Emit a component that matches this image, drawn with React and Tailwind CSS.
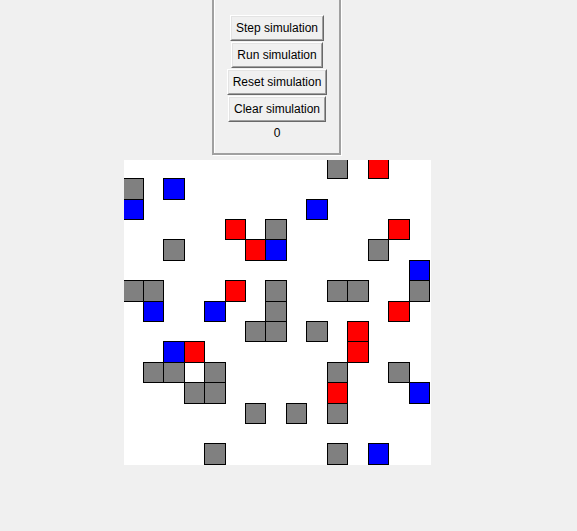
const G = "bg-[#808080]";
const R = "bg-[#ff0000]";
const B = "bg-[#0000ff]";

// [row, col, colour]
const cells = [
  [0, 10, G], [0, 12, R],
  [1, 0, G], [1, 2, B],
  [2, 0, B], [2, 9, B],
  [3, 5, R], [3, 7, G], [3, 13, R],
  [4, 2, G], [4, 6, R], [4, 7, B], [4, 12, G],
  [5, 14, B],
  [6, 0, G], [6, 1, G], [6, 5, R], [6, 7, G], [6, 10, G], [6, 11, G], [6, 14, G],
  [7, 1, B], [7, 4, B], [7, 7, G], [7, 13, R],
  [8, 6, G], [8, 7, G], [8, 9, G], [8, 11, R],
  [9, 2, B], [9, 3, R], [9, 11, R],
  [10, 1, G], [10, 2, G], [10, 4, G], [10, 10, G], [10, 13, G],
  [11, 3, G], [11, 4, G], [11, 10, R], [11, 14, B],
  [12, 6, G], [12, 8, G], [12, 10, G],
  [14, 4, G], [14, 10, G], [14, 12, B],
];

const colStart = [
  "col-start-1", "col-start-2", "col-start-3", "col-start-4", "col-start-5",
  "col-start-6", "col-start-7", "col-start-8", "col-start-9", "col-start-10",
  "col-start-11", "col-start-12", "col-start-13", "col-start-14", "col-start-15",
];
const rowStart = [
  "row-start-1", "row-start-2", "row-start-3", "row-start-4", "row-start-5",
  "row-start-6", "row-start-7", "row-start-8", "row-start-9", "row-start-10",
  "row-start-11", "row-start-12", "row-start-13", "row-start-14", "row-start-15",
];

function ClassicButton({ children }) {
  return (
    <button className="h-[26px] border border-t-white border-l-white border-r-[#696969] border-b-[#696969] bg-[#f0f0f0] text-[12px] leading-none text-black">
      <span className="flex h-full items-center border border-t-[#e3e3e3] border-l-[#e3e3e3] border-r-[#a0a0a0] border-b-[#a0a0a0] px-[4px]">
        {children}
      </span>
    </button>
  );
}

export default function App() {
  return (
    <div
      className="flex h-[531px] w-[577px] flex-col items-start overflow-hidden bg-[#f0f0f0]"
      style={{ fontFamily: '"Liberation Sans", Arial, sans-serif' }}
    >
      <div className="-mt-[3px] ml-[212px] w-[129px] border-2 border-[#a0a0a0] shadow-[1px_1px_0_#ffffff]">
        <div className="flex h-[154px] flex-col items-center border-l border-t border-white pt-[15px]">
          <div className="flex flex-col items-center gap-px">
            <ClassicButton>Step simulation</ClassicButton>
            <ClassicButton>Run simulation</ClassicButton>
            <ClassicButton>Reset simulation</ClassicButton>
            <ClassicButton>Clear simulation</ClassicButton>
          </div>
          <div className="mt-[4px] text-[12px] leading-[14px] text-black">0</div>
        </div>
      </div>

      <div className="ml-[124px] mt-[5px] h-[305px] w-[307px] overflow-hidden bg-white">
        <div className="-ml-[1.6px] -mt-[2.1px] grid grid-cols-[repeat(15,20.44px)] grid-rows-[repeat(15,20.4px)]">
          {cells.map(([r, c, color], i) => (
            <div
              key={i}
              className={`${rowStart[r]} ${colStart[c]} h-[21.4px] w-[21.44px] border border-black ${color}`}
            />
          ))}
        </div>
      </div>
    </div>
  );
}
